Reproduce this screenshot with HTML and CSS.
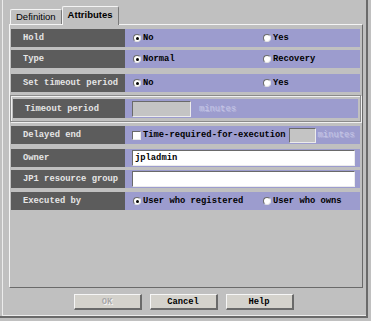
FILE: index.html
```html
<!DOCTYPE html>
<html lang="en">

<head>
    <meta charset="UTF-8">
    <meta name="viewport" content="width=device-width, initial-scale=1.0">
    <title>Attributes</title>
    <link rel="stylesheet" href="styles.css">
</head>

<body>
    <div class="window">
        <!-- Tabs -->
        <div class="tabs">
            <div class="tab">Definition</div>
            <div class="tab active">Attributes</div>
        </div>

        <!-- Attributes panel -->
        <div class="panel">
            <div class="row gap3">
                <div class="label">Hold</div>
                <div class="value">
                    <span class="opt"><span class="radio on"></span>No</span>
                    <span class="opt"><span class="radio"></span>Yes</span>
                </div>
            </div>
            <div class="row gap6">
                <div class="label">Type</div>
                <div class="value">
                    <span class="opt"><span class="radio on"></span>Normal</span>
                    <span class="opt"><span class="radio"></span>Recovery</span>
                </div>
            </div>
            <div class="row gap3">
                <div class="label">Set timeout period</div>
                <div class="value">
                    <span class="opt"><span class="radio on"></span>No</span>
                    <span class="opt"><span class="radio"></span>Yes</span>
                </div>
            </div>
            <div class="group gap4">
                <div class="row inner">
                    <div class="label">Timeout period</div>
                    <div class="value">
                        <span class="field small disabled"></span>
                        <span class="unit">minutes</span>
                    </div>
                </div>
            </div>
            <div class="row gap5">
                <div class="label">Delayed end</div>
                <div class="value">
                    <span class="check"></span>
                    <span class="check-text">Time-required-for-execution</span>
                    <span class="field tiny disabled"></span>
                    <span class="unit">minutes</span>
                </div>
            </div>
            <div class="row gap3">
                <div class="label">Owner</div>
                <div class="value">
                    <span class="field wide">jpladmin</span>
                </div>
            </div>
            <div class="row gap4">
                <div class="label">JP1 resource group</div>
                <div class="value">
                    <span class="field wide"></span>
                </div>
            </div>
            <div class="row">
                <div class="label">Executed by</div>
                <div class="value">
                    <span class="opt"><span class="radio on"></span>User who registered</span>
                    <span class="opt"><span class="radio"></span>User who owns</span>
                </div>
            </div>
        </div>

        <!-- Buttons -->
        <div class="buttons">
            <button class="disabled">OK</button>
            <button>Cancel</button>
            <button>Help</button>
        </div>
    </div>
</body>

</html>
```

FILE: styles.css
```css
body {
    margin: 0;
    background-color: #c0c0c0;
    width: 371px;
    height: 321px;
    overflow: hidden;
}

.window {
    box-sizing: border-box;
    width: 368px;
    height: 318px;
    padding: 6px 0 0 9px;
    border-right: 2px solid #6a6a6a;
    border-bottom: 2px solid #6a6a6a;
    box-shadow: inset 3px 0 0 -1px #c0c0c0, inset 3px 0 0 #ececec, inset 0 -1px 0 #ececec;
}

.tabs {
    display: flex;
    align-items: flex-end;
    height: 18px;
    padding-left: 1px;
    position: relative;
    z-index: 1;
}

.tab {
    box-sizing: border-box;
    height: 15px;
    padding: 0 5px;
    font-family: "Liberation Sans", Arial, sans-serif;
    font-size: 9.5px;
    line-height: 14px;
    color: #000;
    border-top: 1px solid #f4f4f4;
    border-left: 1px solid #f4f4f4;
    border-right: 1px solid #7a7a7a;
    border-radius: 2px 2px 0 0;
    background-color: #c0c0c0;
}

.tab.active {
    height: 19px;
    margin-bottom: -1px;
    padding: 0 6px 0 5px;
    font-weight: bold;
    line-height: 15px;
}

.panel {
    box-sizing: border-box;
    width: 354px;
    height: 264px;
    padding: 4px 0 0 1px;
    border-top: 1px solid #f4f4f4;
    border-left: 1px solid #f4f4f4;
    border-right: 1px solid #6a6a6a;
    border-bottom: 1px solid #6a6a6a;
}

.row {
    display: flex;
    width: 349px;
    height: 18px;
    font-family: "Liberation Mono", "Courier New", monospace;
    font-size: 8.8px;
    font-weight: bold;
}

.gap3 { margin-bottom: 3px; }
.gap4 { margin-bottom: 4px; }
.gap5 { margin-bottom: 5px; }
.gap6 { margin-bottom: 6px; }

.label {
    box-sizing: border-box;
    flex-shrink: 0;
    width: 114px;
    padding-left: 12px;
    display: flex;
    align-items: center;
    background-color: #5c5c5c;
    color: #e6e6e6;
    white-space: nowrap;
}

.value {
    flex: 1;
    min-width: 0;
    display: flex;
    align-items: center;
    padding-left: 8px;
    background-color: #9c9cce;
    color: #000;
    white-space: nowrap;
}

.group {
    box-sizing: border-box;
    width: 351px;
    margin-left: -1px;
    padding: 3px 2px;
    border: 1px solid #8a8a8a;
    box-shadow: inset 1px 1px 0 #f0f0f0, 1px 1px 0 #f0f0f0;
}

.row.inner {
    width: 345px;
    height: 19px;
}

.row.inner .label {
    width: 112px;
}

.opt {
    display: flex;
    align-items: center;
    flex-shrink: 0;
    width: 130px;
}

.opt + .opt {
    width: auto;
}

.radio {
    box-sizing: border-box;
    width: 8px;
    height: 8px;
    margin-right: 2px;
    border-radius: 50%;
    background-color: #fff;
    border-top: 1px solid #6a6a6a;
    border-left: 1px solid #6a6a6a;
    border-right: 1px solid #e0e0e0;
    border-bottom: 1px solid #e0e0e0;
    display: flex;
    align-items: center;
    justify-content: center;
}

.radio.on::after {
    content: "";
    width: 3px;
    height: 3px;
    border-radius: 50%;
    background-color: #000;
}

.check {
    box-sizing: border-box;
    flex-shrink: 0;
    width: 9px;
    height: 9px;
    margin-left: -1px;
    margin-right: 2px;
    background-color: #fff;
    border-top: 1px solid #6a6a6a;
    border-left: 1px solid #6a6a6a;
    border-right: 1px solid #e8e8e8;
    border-bottom: 1px solid #e8e8e8;
}

.check-text {
    margin-right: 3px;
}

.field {
    box-sizing: border-box;
    flex-shrink: 0;
    height: 16px;
    padding-left: 2px;
    background-color: #fff;
    border-top: 1px solid #6a6a6a;
    border-left: 1px solid #6a6a6a;
    border-right: 1px solid #ececec;
    border-bottom: 1px solid #ececec;
    line-height: 14px;
    font-weight: bold;
}

.field.wide {
    width: 223px;
    margin-left: -1px;
}

.field.small {
    width: 59px;
    margin-left: -1px;
    margin-right: 8px;
}

.field.tiny {
    width: 27px;
    height: 15px;
    margin-right: 2px;
}

.field.disabled {
    background-color: #c4c4c4;
}

.unit {
    color: #c4c4e6;
    text-shadow: 1px 1px 0 #b8b8dc;
    font-weight: normal;
}

.buttons {
    display: flex;
    justify-content: center;
    gap: 8px;
    margin-top: 6px;
    padding-right: 8px;
}

button {
    box-sizing: border-box;
    width: 68px;
    height: 16px;
    padding: 0;
    font-family: "Liberation Mono", "Courier New", monospace;
    font-size: 8.8px;
    font-weight: bold;
    color: #000;
    background-color: #d4d2cc;
    border-top: 1px solid #f6f6f6;
    border-left: 1px solid #f6f6f6;
    border-right: 2px solid #6a6a6a;
    border-bottom: 2px solid #6a6a6a;
}

button.disabled {
    color: #a8a8a8;
    text-shadow: 1px 1px 0 #f4f4f4;
}
```
